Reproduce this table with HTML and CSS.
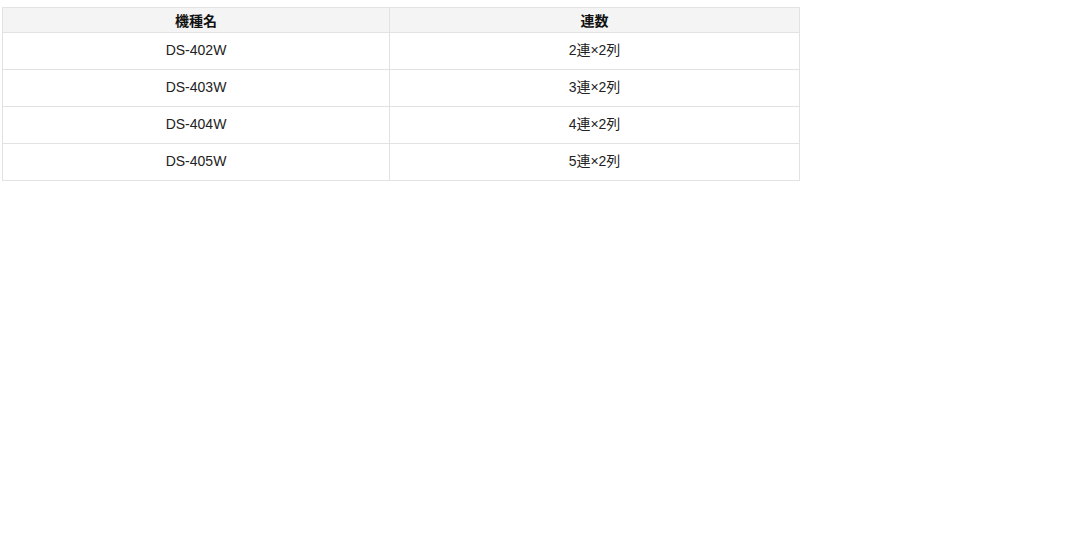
FILE: index.html
```html
<!DOCTYPE html>
<html lang="ja">

<head>
    <meta charset="UTF-8">
    <meta name="viewport" content="width=device-width, initial-scale=1.0">
    <title>機種一覧</title>
    <link rel="stylesheet" href="styles.css">
</head>

<body>
    <table class="spec-table">
        <thead>
            <tr>
                <th class="col-model">機種名</th>
                <th>連数</th>
            </tr>
        </thead>
        <tbody>
            <tr>
                <td>DS-402W</td>
                <td>2連×2列</td>
            </tr>
            <tr>
                <td>DS-403W</td>
                <td>3連×2列</td>
            </tr>
            <tr>
                <td>DS-404W</td>
                <td>4連×2列</td>
            </tr>
            <tr>
                <td>DS-405W</td>
                <td>5連×2列</td>
            </tr>
        </tbody>
    </table>
</body>

</html>
```

FILE: styles.css
```css
body {
    font-family: "Liberation Sans", Arial, "Noto Sans CJK JP", sans-serif;
    font-size: 14px;
    color: #222;
    background-color: #fff;
    margin: 0;
    padding: 7px 0 0 2px;
}

.spec-table {
    border-collapse: collapse;
    width: 798px;
    table-layout: fixed;
}

.spec-table .col-model {
    width: 386px;
}

.spec-table th,
.spec-table td {
    border: 1px solid #e2e2e2;
    text-align: center;
    padding: 0;
}

.spec-table th {
    background-color: #f4f4f4;
    font-weight: bold;
    color: #111;
    height: 24px;
}

.spec-table td {
    height: 34px;
    line-height: 1;
    padding-bottom: 2px;
}
```
